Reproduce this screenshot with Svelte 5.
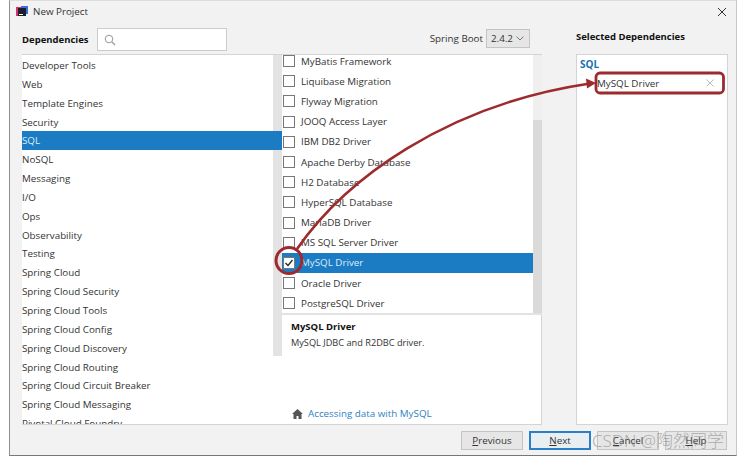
<script>
  const categories = [
    'Developer Tools', 'Web', 'Template Engines', 'Security', 'SQL', 'NoSQL', 'Messaging', 'I/O', 'Ops',
    'Observability', 'Testing', 'Spring Cloud', 'Spring Cloud Security', 'Spring Cloud Tools',
    'Spring Cloud Config', 'Spring Cloud Discovery', 'Spring Cloud Routing', 'Spring Cloud Circuit Breaker',
    'Spring Cloud Messaging', 'Pivotal Cloud Foundry',
  ]
  const selectedCategory = 'SQL'

  const drivers = [
    'MyBatis Framework', 'Liquibase Migration', 'Flyway Migration', 'JOOQ Access Layer', 'IBM DB2 Driver',
    'Apache Derby Database', 'H2 Database', 'HyperSQL Database', 'MariaDB Driver', 'MS SQL Server Driver',
    'MySQL Driver', 'Oracle Driver', 'PostgreSQL Driver',
  ]
  const selectedDriver = 'MySQL Driver'
</script>

<main class="window">
  <header class="titlebar">
    <svg class="logo" width="12" height="12" viewBox="0 0 12 12">
      <rect x="0" y="1" width="7" height="9" fill="#d6336c" />
      <rect x="5" y="0" width="7" height="8" fill="#3b6fd8" />
      <rect x="2" y="2" width="8" height="8" fill="#1c1c2a" />
      <rect x="3" y="8" width="4" height="1" fill="#fff" />
    </svg>
    <span>New Project</span>
    <svg class="close" width="10" height="10" viewBox="0 0 10 10">
      <path d="M1 1 9 9M9 1 1 9" stroke="#333" stroke-width="1" fill="none" />
    </svg>
  </header>

  <div class="content">
    <div class="main-col">
      <div class="toolbar">
        <b class="heading dep-heading">Dependencies</b>
        <div class="search">
          <svg width="12" height="12" viewBox="0 0 12 12">
            <circle cx="5" cy="5" r="3.8" stroke="#999" fill="none" />
            <path d="M8 8 11 11" stroke="#999" stroke-width="1.2" />
          </svg>
        </div>
        <div class="spacer"></div>
        <span class="boot-label">Spring Boot</span>
        <div class="select">
          <span>2.4.2</span>
          <svg width="8" height="5" viewBox="0 0 8 5">
            <path d="M.5 .5 4 4 7.5 .5" stroke="#777" fill="none" />
          </svg>
        </div>
      </div>

      <div class="panels">
        <div class="categories">
          <ul>
            {#each categories as category}
              <li class:selected={category === selectedCategory}>{category}</li>
            {/each}
          </ul>
          <div class="scroll-left"><div class="thumb"></div></div>
        </div>

        <div class="middle">
          <div class="driver-box">
            <ul>
              {#each drivers as driver}
                <li class:selected={driver === selectedDriver}>
                  <span class="check">
                    {#if driver === selectedDriver}
                      <svg width="10" height="10" viewBox="0 0 10 10">
                        <path d="M1.5 5 4 7.5 8.5 2" stroke="#222" stroke-width="1.3" fill="none" />
                      </svg>
                    {/if}
                  </span>
                  {driver}
                </li>
              {/each}
            </ul>
            <div class="scroll-mid"><div class="thumb"></div></div>
          </div>
          <div class="details">
            <b>MySQL Driver</b>
            <p>MySQL JDBC and R2DBC driver.</p>
            <div class="link">
              <svg width="11" height="10" viewBox="0 0 11 10">
                <path d="M5.5 0 11 5H9.5V10H6.5V7H4.500V10H1.500V5H0Z" fill="#555" />
              </svg>
              <span>Accessing data with MySQL</span>
            </div>
          </div>
        </div>
      </div>
    </div>

    <div class="side-col">
      <b class="heading side-heading">Selected Dependencies</b>
      <div class="selected-box">
        <b class="group">SQL</b>
        <div class="chip">
          <span>MySQL Driver</span>
          <svg width="8" height="8" viewBox="0 0 8 8">
            <path d="M.5 .5 7.500 7.500M7.500 .5 .5 7.500" stroke="#bbb" fill="none" />
          </svg>
        </div>
      </div>
    </div>
  </div>

  <footer class="buttons">
    <button><u>P</u>revious</button>
    <button class="primary"><u>N</u>ext</button>
    <button><u>C</u>ancel</button>
    <button><u>H</u>elp</button>
  </footer>

  <!-- red annotations drawn on top of the screenshot -->
  <svg class="annotations" width="743" height="457" viewBox="0 0 743 457">
    <circle cx="289" cy="260.500" r="13" fill="none" stroke="#9d2b2d" stroke-width="3" />
    <path d="M297 249C345 180 445 105 590 83.500" fill="none" stroke="#9d2b2d" stroke-width="2.600" />
    <path d="M596 83 586 78.500 587 88.500Z" fill="#9d2b2d" />
    <rect x="596" y="73" width="127.500" height="20" rx="4" fill="none" stroke="#9d2b2d" stroke-width="2.800" />
  </svg>

  <span class="watermark">CSDN @陶然同学</span>
</main>

<style>
  :global(body) {
    background: #fff;
    overflow: hidden;
  }
  .window {
    width: 728px;
    height: 456px;
    margin-left: 9px;
    box-sizing: border-box;
    border-top: 1px solid #ddd;
    border-left: 1px solid #8f8f8f;
    border-right: 1px solid #c8c8c8;
    border-bottom: 1px solid #777;
    background: #f2f2f2;
    color: #333;
    font-family: "Open Sans", "Noto Sans", sans-serif;
    font-size: 9.8px;
    display: flex;
    flex-direction: column;
  }
  ul {
    list-style: none;
    margin: 0;
    padding: 0;
  }
  b {
    color: #111;
    font-weight: 700;
    font-size: 9.5px;
  }
  .titlebar {
    height: 27px;
    flex: none;
    display: flex;
    align-items: center;
    padding: 0 9px 6px 6px;
    box-sizing: border-box;
  }
  .logo {
    margin-right: 5px;
  }
  .close {
    margin-left: auto;
  }
  .content {
    display: flex;
    padding-left: 12px;
    gap: 34px;
  }
  .main-col {
    width: 520px;
  }
  .toolbar {
    height: 23px;
    display: flex;
    align-items: center;
    margin-bottom: 3px;
  }
  .dep-heading {
    width: 65px;
    flex: none;
  }
  .search {
    width: 130px;
    height: 23px;
    box-sizing: border-box;
    margin-left: 10px;
    padding-left: 6px;
    display: flex;
    align-items: center;
    background: #fff;
    border: 1px solid #ccc;
  }
  .spacer {
    flex: 1;
  }
  .boot-label {
    margin-right: 3px;
    margin-top: -3px;
  }
  .select {
    width: 44px;
    height: 19px;
    margin-right: 12px;
    margin-top: -3px;
    box-sizing: border-box;
    display: flex;
    align-items: center;
    justify-content: space-between;
    padding: 0 5px 0 4px;
    background: #e6e6e6;
    border: 1px solid #c4c4c4;
  }
  .panels {
    display: flex;
    height: 371px;
  }
  .categories {
    width: 260px;
    flex: none;
    display: flex;
    background: #fff;
    overflow: hidden;
    box-sizing: border-box;
    border-top: 1px solid #d4d4d4;
    border-bottom: 1px solid #d4d4d4;
  }
  .categories ul {
    flex: 1;
    padding-top: 1px;
    min-width: 0;
  }
  .categories li {
    height: 18.85px;
    line-height: 19px;
    white-space: nowrap;
  }
  .categories li.selected {
    margin-right: -9px;
    position: relative;
    background: #1b7cc4;
    color: #dcecf8;
  }
  .scroll-left {
    width: 9px;
    flex: none;
  }
  .scroll-left .thumb {
    height: 301px;
    background: #e3e3e3;
  }
  .middle {
    width: 260px;
    flex: none;
    display: flex;
    flex-direction: column;
    border-top: 1px solid #d4d4d4;
    border-bottom: 1px solid #d4d4d4;
    box-sizing: border-box;
    background: #fff;
  }
  .driver-box {
    height: 258px;
    flex: none;
    display: flex;
    overflow: hidden;
    border-bottom: 2px solid #e2e2e2;
  }
  .driver-box ul {
    flex: 1;
    margin-top: -4px;
  }
  .driver-box li {
    height: 20.2px;
    display: flex;
    align-items: center;
    gap: 6px;
    padding-left: 1px;
    white-space: nowrap;
  }
  .driver-box li.selected {
    background: #1b7cc4;
    color: #dcecf8;
  }
  .check {
    width: 10px;
    height: 10px;
    flex: none;
    box-sizing: content-box;
    display: flex;
    align-items: center;
    justify-content: center;
    background: #fff;
    border: 1px solid #777;
  }
  .scroll-mid {
    width: 9px;
    flex: none;
    background: #efefef;
    padding-top: 65px;
  }
  .scroll-mid .thumb {
    height: 100%;
    background: #dadada;
  }
  .details {
    flex: 1;
    display: flex;
    flex-direction: column;
    padding: 5px 9px 4px;
    border-right: 1px solid #d4d4d4;
  }
  .details p {
    margin: 3px 0 0;
    font-size: 9.2px;
  }
  .link {
    margin-top: auto;
    display: flex;
    align-items: center;
    gap: 5px;
    color: #2f7fc1;
    padding-left: 1px;
  }
  .side-col {
    width: 152px;
    flex: none;
  }
  .side-heading {
    display: block;
    height: 26px;
    line-height: 18px;
  }
  .selected-box {
    height: 371px;
    box-sizing: border-box;
    background: #fff;
    border: 1px solid #d4d4d4;
    padding: 2px 3px;
  }
  .group {
    display: block;
    color: #1a6fb5;
    line-height: 15px;
    font-size: 10px;
  }
  .chip {
    display: flex;
    align-items: center;
    justify-content: space-between;
    height: 20px;
    margin: 1px 0 0 17px;
    padding-right: 10px;
  }
  .buttons {
    display: flex;
    justify-content: flex-end;
    gap: 6px;
    padding: 6px 9px 0 0;
  }
  button {
    width: 62px;
    height: 19px;
    padding: 0;
    box-sizing: border-box;
    font: inherit;
    color: #333;
    background: #e6e6e6;
    border: 1px solid #c4c4c4;
  }
  button.primary {
    border: 2px solid #2a7fc9;
    background: #e9eef3;
  }
  .annotations {
    position: absolute;
    left: 0;
    top: 0;
    pointer-events: none;
  }
  .watermark {
    position: absolute;
    left: 592px;
    top: 427px;
    font-size: 17px;
    font-weight: 300;
    font-family: "Noto Sans", "Noto Sans CJK SC", sans-serif;
    color: rgba(130, 130, 130, 0.6);
    white-space: nowrap;
  }
</style>
